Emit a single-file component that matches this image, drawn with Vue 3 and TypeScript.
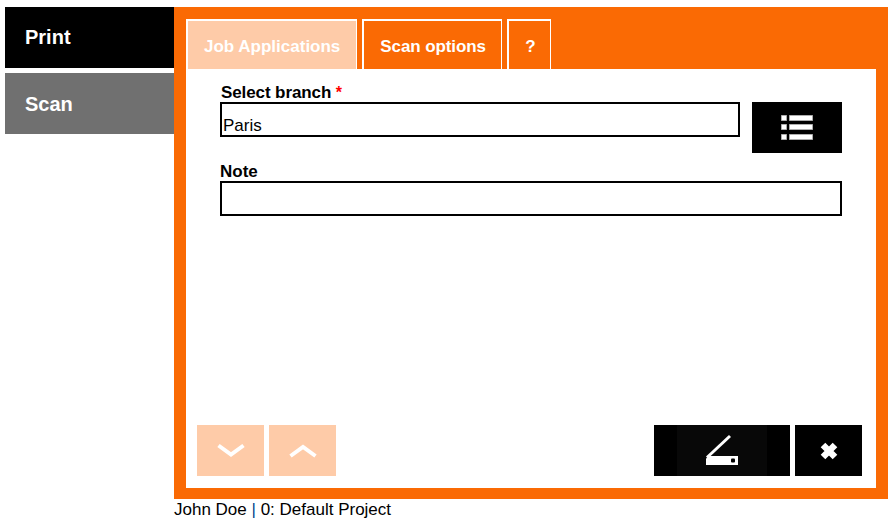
<script setup lang="ts">
const tabs: { label: string; active?: boolean }[] = [
  { label: 'Job Applications', active: true },
  { label: 'Scan options' },
  { label: '?' },
]
</script>

<template>
  <div class="page">
    <div class="top">
      <nav class="side">
        <div class="side-item print">Print</div>
        <div class="side-item scan">Scan</div>
      </nav>
      <main class="frame">
        <div class="tabs">
          <div v-for="t in tabs" :key="t.label" class="tab" :class="{ active: t.active }">{{ t.label }}</div>
        </div>
        <div class="panel">
          <div class="form">
            <div class="label first">Select branch <span class="req">*</span></div>
            <div class="row">
              <div class="input branch">Paris</div>
              <button class="btn list" type="button" aria-label="List">
                <svg width="32" height="25" viewBox="0 0 32 25">
                  <g fill="#fff" stroke="#999" stroke-width="0.5">
                    <rect x="0.25" y="0.25" width="5.5" height="5.5" />
                    <rect x="8.25" y="0.25" width="23.5" height="5.5" />
                    <rect x="0.25" y="9.25" width="5.5" height="5.5" />
                    <rect x="8.25" y="9.25" width="23.5" height="5.5" />
                    <rect x="0.25" y="19.25" width="5.5" height="5.5" />
                    <rect x="8.25" y="19.25" width="23.5" height="5.5" />
                  </g>
                </svg>
              </button>
            </div>
            <div class="label note">Note</div>
            <div class="input note-input"></div>
          </div>
          <div class="actions">
            <div class="group">
              <button class="btn nav" type="button" aria-label="Down">
                <svg width="30" height="16" viewBox="0 0 30 16">
                  <path d="M2.5 2.5 L15 11.5 L27.5 2.5" fill="none" stroke="#fff" stroke-width="4" />
                </svg>
              </button>
              <button class="btn nav" type="button" aria-label="Up">
                <svg width="30" height="16" viewBox="0 0 30 16">
                  <path d="M2.5 13 L15 4 L27.5 13" fill="none" stroke="#fff" stroke-width="4" />
                </svg>
              </button>
            </div>
            <div class="group">
              <button class="btn scanbtn" type="button" aria-label="Scan">
                <span class="scan-inner">
                  <svg width="34" height="33" viewBox="0 0 34 33">
                    <path d="M2 23.5 L25 2" fill="none" stroke="#fff" stroke-width="3" />
                    <path d="M3.5 22 H33 V31 H1 V24.5 Z" fill="#fff" />
                    <rect x="26" y="24.5" width="4" height="4" rx="1" fill="#000" />
                  </svg>
                </span>
              </button>
              <button class="btn close" type="button" aria-label="Close">
                <svg width="20" height="20" viewBox="0 0 20 20">
                  <path d="M4 4 L16 16 M16 4 L4 16" fill="none" stroke="#fff" stroke-width="6.5" />
                </svg>
              </button>
            </div>
          </div>
        </div>
      </main>
    </div>
    <div class="status">John Doe <span class="sep">|</span> 0: Default Project</div>
  </div>
</template>

<style>
html, body { margin: 0; background: #fff; }
</style>

<style scoped>
.page {
  width: 895px;
  height: 526px;
  padding: 7px 7px 0 5px;
  box-sizing: border-box;
  font-family: "Liberation Sans", Arial, sans-serif;
  color: #000;
  overflow: hidden;
}
.top { display: flex; }
.side { width: 169px; display: flex; flex-direction: column; gap: 5px; }
.side-item {
  height: 61px;
  box-sizing: border-box;
  padding: 19px 0 0 20px;
  font-size: 20px;
  line-height: 23px;
  font-weight: 700;
  color: #fff;
}
.side-item.print { background: #000; }
.side-item.scan { background: #707070; padding-top: 20px; }
.frame {
  width: 714px;
  height: 492px;
  box-sizing: border-box;
  background: #fa6a04;
  padding: 12px 12px 11px;
  display: flex;
  flex-direction: column;
}
.tabs { display: flex; gap: 5px; height: 50px; }
.tab {
  box-sizing: border-box;
  height: 50px;
  padding: 0 16px;
  border-style: solid;
  border-color: #fff;
  border-width: 2px 1px 0 2px;
  color: #fff;
  font-size: 17px;
  font-weight: 700;
  line-height: 51px;
  white-space: nowrap;
}
.tab.active { background: #fecba8; }
.tab:nth-child(2) { width: 140px; padding-right: 0; letter-spacing: -0.1px; }
.tab:nth-child(3) { width: 44px; padding-right: 0; }
.panel {
  flex: 1;
  background: #fff;
  display: flex;
  flex-direction: column;
  justify-content: space-between;
  padding: 14px 14px 12px 11px;
}
.form { padding-left: 23px; }
.label { font-size: 17px; line-height: 19px; font-weight: 700; }
.label.first { padding-left: 1px; letter-spacing: -0.1px; }
.req { color: #f00; font-size: 16px; }
.row { display: flex; gap: 12px; }
.input {
  box-sizing: border-box;
  border: 2px solid #000;
  height: 35px;
  font-size: 17px;
  line-height: 43px;
  background: #fff;
}
.branch { width: 520px; padding-left: 1px; }
.note-input { width: 622px; }
.note { margin-top: 9px; }
.btn {
  border: 0;
  padding: 0;
  margin: 0;
  display: flex;
  align-items: center;
  justify-content: center;
  background: #000;
  height: 51px;
}
.list { width: 90px; }
.actions { display: flex; justify-content: space-between; }
.group { display: flex; gap: 5px; }
.nav { width: 67px; background: #fecba8; }
.scanbtn { width: 136px; }
.scan-inner {
  width: 90px;
  height: 51px;
  background: #080808;
  display: flex;
  align-items: center;
  justify-content: center;
}
.close { width: 67px; }
.status { font-size: 17px; line-height: 19px; margin-top: 1px; padding-left: 169px; }
.sep { color: #00408a; }
</style>
